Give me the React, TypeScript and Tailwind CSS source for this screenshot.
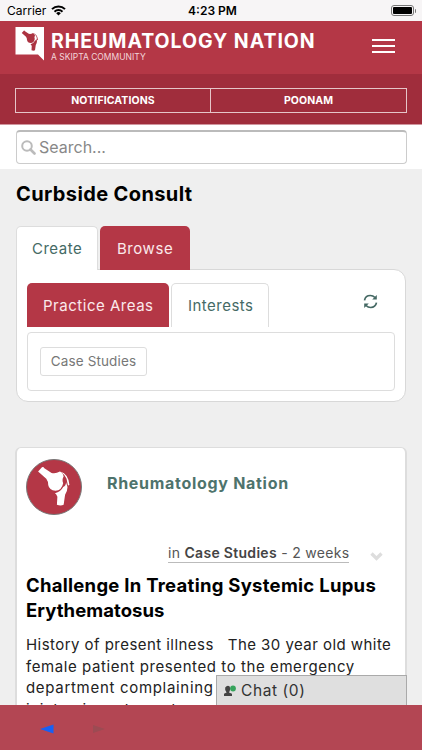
import React from "react";

function Wifi() {
  return (
    <svg className="ml-[5px] h-[11px] w-[15px]" viewBox="0 0 15 11">
      <path d="M1 4.1a9.2 9.2 0 0 1 13 0" fill="none" stroke="#000" strokeWidth="2" />
      <path d="M3.5 6.7a5.7 5.7 0 0 1 8 0" fill="none" stroke="#000" strokeWidth="1.9" />
      <path d="M5.2 8.2a3.3 3.3 0 0 1 4.6 0L7.5 10.6Z" fill="#000" />
    </svg>
  );
}

function Joint({ className, fill }: { className: string; fill: string }) {
  return (
    <svg className={className} viewBox="0 0 56 56" fill={fill}>
      <path d="M11.500 12 15.500 7.500Q17 6.500 18 8.500L25.500 13.500Q30 14.500 34 12Q37 13 38 17Q36 20 37.500 24Q36 31.500 29.500 32Q23 31.500 22 26Q22 22 20 19.500Z" />
      <path d="M34.500 12Q43 14.500 44 26L42.500 26.500Q41.500 22 41 19.500Q38.500 14.500 34.500 12Z" />
      <path d="M37.500 28Q40.500 26.500 40.500 23L42 28Q42 32 39.500 36L38 46.500Q35 48 31 46.500L31.500 38Q30.500 35.500 29 34.500Q35 33 37.500 28Z" />
    </svg>
  );
}

function Logo() {
  return (
    <div className="relative h-[34px] w-[29px]">
      <svg className="h-[34px] w-[29px]" viewBox="0 0 29 34">
        <path d="M.5 0H29V33.500L23 27.500H.5Z" fill="#fff" />
      </svg>
      <Joint className="absolute top-0 left-[1px] h-[28px] w-[28px]" fill="#ac3341" />
    </div>
  );
}

export default function App() {
  return (
    <div className="flex h-[750px] w-[422px] flex-col overflow-hidden bg-[#efefef] font-['Inter','Liberation_Sans',sans-serif] text-black">
      <div className="grid h-[21px] shrink-0 grid-cols-3 items-center bg-[#f7f5f6] text-[12px]">
        <div className="flex items-center pl-[7px]">
          <span>Carrier</span>
          <Wifi />
        </div>
        <span className="pt-px pl-[3px] text-center text-[12px] leading-[18px] font-semibold">4:23 PM</span>
        <div className="flex items-center justify-end pr-[6px]">
          <div className="h-[11px] w-[23px] rounded-[3px] border border-[#777] p-px">
            <div className="h-full rounded-[1px] bg-black" />
          </div>
          <div className="ml-px h-[4px] w-[1.500px] rounded-r bg-[#777]" />
        </div>
      </div>

      <header className="flex h-[53px] shrink-0 items-start bg-[#b43746] pr-[27px] pl-[15px] text-white">
        <div className="pt-[6px]"><Logo /></div>
        <div className="flex-1 pt-[9px] pl-[7px] whitespace-nowrap">
          <h1 className="text-[19.500px] leading-[23px] font-bold tracking-[0.960px]">RHEUMATOLOGY NATION</h1>
          <p className="text-[8.500px] leading-[8px] text-[#f3d5d9]">A SKIPTA COMMUNITY</p>
        </div>
        <div className="flex w-[23px] flex-col gap-[4px] pt-[18px]">
          <i className="h-[2px] bg-white" />
          <i className="h-[2px] bg-white" />
          <i className="h-[2px] bg-white" />
        </div>
      </header>

      <nav className="h-[51px] shrink-0 border-b border-[#d0969e] bg-[#a02d3c] px-[15px] pt-[14px]">
        <div className="grid h-[25px] grid-cols-2 border border-[#e6c5c9] text-center text-[10.500px] leading-[23px] font-bold text-white">
          <span className="border-r border-[#e6c5c9] tracking-[0.1px]">NOTIFICATIONS</span>
          <span className="tracking-[0.1px]">POONAM</span>
        </div>
      </nav>

      <div className="h-[44px] shrink-0 bg-white pr-[15px] pl-[16px] pt-[5px]">
        <div className="flex h-[34px] items-center rounded-[4px] border border-t-2 border-[#ccc] border-t-[#bbb] pb-px pl-[4px]">
          <svg className="h-[15px] w-[15px]" viewBox="0 0 15 15" fill="none" stroke="#bbb">
            <circle cx="6" cy="6" r="4.800" strokeWidth="2" />
            <path d="m9.500 9.500 4 4" strokeWidth="2.600" strokeLinecap="round" />
          </svg>
          <span className="pl-[3px] text-[16px] text-[#888]">Search...</span>
        </div>
      </div>

      <main className="h-[536px] shrink-0 overflow-hidden px-[15px]">
        <h2 className="pt-[13px] pl-[1px] text-[20px] leading-[24px] font-bold tracking-[0.380px]">Curbside Consult</h2>

        <div className="mt-[20px] flex h-[43px] gap-[2px] pl-[1px] text-[15px] leading-[44px]">
          <div className="relative h-[44px] w-[82px] rounded-t-[5px] border border-b-0 border-[#ddd] bg-white pl-[15px] tracking-[0.500px] text-[#456a65]">Create</div>
          <div className="h-[44px] w-[90px] rounded-t-[5px] bg-[#b43746] pt-px pl-[17px] tracking-[0.550px] text-[#fbe9eb]">Browse</div>
        </div>
        <section className="ml-[1px] h-[133px] w-[390px] rounded-[12px] rounded-tl-none border border-[#d8d8d8] bg-white px-[10px] pt-[13px]">
          <div className="flex h-[44px] gap-[2px] text-[15px] leading-[44px]">
            <div className="w-[142px] rounded-t-[5px] bg-[#b43746] pt-px pl-[16px] tracking-[0.520px] text-[#fbe9eb]">Practice Areas</div>
            <div className="w-[98px] rounded-t-[5px] border border-b-0 border-[#ddd] pl-[16px] tracking-[0.480px] text-[#456a65]">Interests</div>
            <svg className="mt-[11px] ml-[92px] h-[15px] w-[15px]" viewBox="0 0 15 15" fill="#446863" stroke="#446863">
              <path d="M1.500 6.300Q2.500 1.500 7.300 1.500 10 1.500 12 3.500M13.500 8.700Q12.500 13.500 7.700 13.500 5 13.500 3 11.500" fill="none" strokeWidth="1.700" />
              <path d="M13.800 1V5.600H9.200ZM1.200 14V9.400H5.800Z" stroke="none" />
            </svg>
          </div>
          <div className="mt-[5px] h-[59px] w-[368px] rounded-[4px] border border-[#ddd] pt-[14px] pl-[12px]">
            <button className="h-[29px] w-[107px] rounded-[3px] border border-[#ddd] text-[13.500px] leading-[27px] tracking-[0.120px] text-[#777]">Case Studies</button>
          </div>
        </section>

        <article className="mt-[45px] h-[300px] rounded-[6px] border-2 border-t border-[#ddd] bg-white px-[9px] whitespace-nowrap">
          <div className="flex items-start pt-[11px]">
            <div className="h-[56px] w-[56px] overflow-hidden rounded-full border border-[#777] bg-[#b43746]">
              <Joint className="h-[54px] w-[54px]" fill="#fff" />
            </div>
            <h3 className="mt-[14px] ml-[25px] text-[16px] leading-[20px] font-bold tracking-[0.700px] text-[#4e736c]">Rheumatology Nation</h3>
          </div>
          <div className="mt-[28px] flex pl-[142px]">
            <p className="h-[20px] border-b border-[#bbb] text-[14px] leading-[19px] tracking-[0.300px] text-[#555]">
              in <b className="font-semibold text-[#444]">Case Studies</b> - 2 weeks
            </p>
            <svg className="mt-[9px] ml-[21px] h-[10px] w-[13px]" viewBox="0 0 13 10">
              <path d="m1.500 1.500 5 5 5-5" fill="none" stroke="#ddd" strokeWidth="3.300" />
            </svg>
          </div>
          <h2 className="mt-[10px] text-[18.500px] leading-[25px] font-bold">
            <span className="block tracking-[0.270px]">Challenge In Treating Systemic Lupus</span>
            <span className="block tracking-[0.060px]">Erythematosus</span>
          </h2>
          <div className="mt-[11px] text-[15px] leading-[21.500px] text-[#222]">
            <p className="tracking-[0.450px]">History of present illness &nbsp; The 30 year old white</p>
            <p className="tracking-[0.580px]">female patient presented to the emergency</p>
            <p className="tracking-[0.690px]">department complaining</p>
            <p className="tracking-[0.550px]">joint pain and cough</p>
          </div>
        </article>
      </main>

      <footer className="relative h-[45px] shrink-0 bg-[#b34653]">
        <div className="absolute -top-[30px] left-[216px] flex h-[30px] w-[191px] items-center border border-b-0 border-[#aaa] bg-[#dfdfdf] pl-[6px] text-[15.500px] tracking-[0.600px] text-[#333]">
          <svg className="h-[12px] w-[14px]" viewBox="0 0 14 12">
            <path d="M1 11V8.800L3.600 7.500Q1.500 5 2.200 2.500 4 0 6.500 1.200 8 4 6 7.500L9 8.800V11Z" fill="#444" />
            <circle cx="10" cy="3.500" r="2.900" fill="#36a35c" />
          </svg>
          <span className="pl-[4px]">Chat (0)</span>
        </div>
        <svg className="h-[45px] w-[120px]" viewBox="0 0 120 45">
          <path d="m40 24 13.500-4.500v9Z" fill="#1760f4" />
          <path d="m105 24-12-4v8Z" fill="#9c4b53" />
        </svg>
      </footer>
    </div>
  );
}
